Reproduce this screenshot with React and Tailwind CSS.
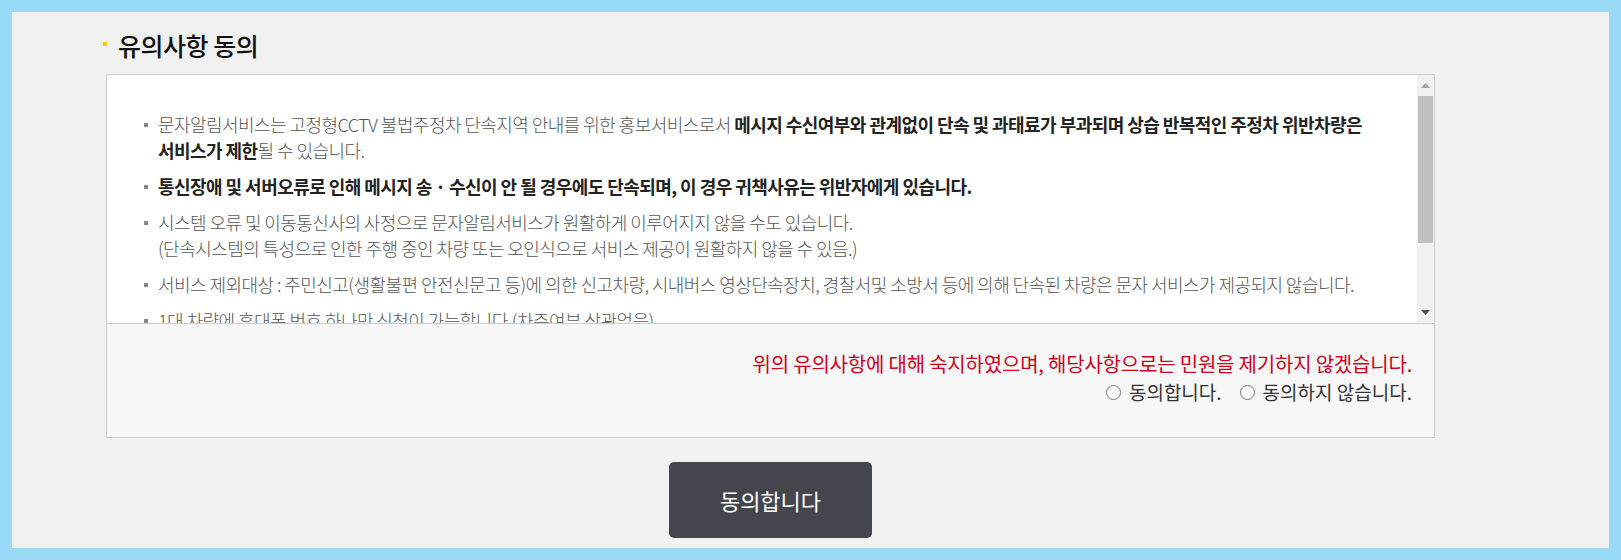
import React, { useState } from "react";

const notices = [
  {
    id: 1,
    content: (
      <>
        문자알림서비스는 고정형CCTV 불법주정차 단속지역 안내를 위한 홍보서비스로서{" "}
        <b className="font-bold text-[#222]">
          메시지 수신여부와 관계없이 단속 및 과태료가 부과되며 상습 반복적인 주정차 위반차량은 서비스가 제한
        </b>
        될 수 있습니다.
      </>
    ),
  },
  {
    id: 2,
    content: (
      <b className="font-bold text-[#222]">
        통신장애 및 서버오류로 인해 메시지 송 · 수신이 안 될 경우에도 단속되며, 이 경우 귀책사유는 위반자에게 있습니다.
      </b>
    ),
  },
  {
    id: 3,
    content: (
      <>
        시스템 오류 및 이동통신사의 사정으로 문자알림서비스가 원활하게 이루어지지 않을 수도 있습니다.
        <br />
        (단속시스템의 특성으로 인한 주행 중인 차량 또는 오인식으로 서비스 제공이 원활하지 않을 수 있음.)
      </>
    ),
  },
  {
    id: 4,
    content:
      "서비스 제외대상 : 주민신고(생활불편 안전신문고 등)에 의한 신고차량, 시내버스 영상단속장치, 경찰서및 소방서 등에 의해 단속된 차량은 문자 서비스가 제공되지 않습니다.",
  },
  {
    id: 5,
    content: "1대 차량에 휴대폰 번호 하나만 신청이 가능합니다.(차주여부 상관없음)",
  },
];

function Radio({ checked, label, onClick }) {
  return (
    <label className="flex items-center cursor-pointer" onClick={onClick}>
      <span className="w-[15px] h-[15px] rounded-full border border-[#777] bg-white mr-[8px] flex items-center justify-center">
        {checked && <span className="w-[7px] h-[7px] rounded-full bg-[#333]" />}
      </span>
      {label}
    </label>
  );
}

export default function App() {
  const [agree, setAgree] = useState(null);

  return (
    <div
      className="h-[560px] bg-[#98d9f5] p-3"
      style={{ fontFamily: '"Noto Sans CJK KR", "Noto Sans", sans-serif' }}
    >
      <div className="h-full bg-[#f1f1f1] pt-[17px]">
        <div className="ml-[94px] w-[1329px]">
          <h2 className="-ml-[3px] flex items-center text-[25px] leading-[32px] font-medium tracking-[-0.5px] text-[#111]">
            <span className="w-[4px] h-[4px] bg-[#ffcc00] mr-[11px] -mt-[2px]" />
            유의사항 동의
          </h2>

          <div className="mt-[13px] border border-[#cccccc] bg-white">
            <div className="flex h-[249px] border-b border-[#cccccc]">
              <ul className="flex-1 overflow-hidden pt-[36px] pl-[37px] pr-[20px] text-[18px] leading-[26px] font-light tracking-[-0.55px] text-[#555] break-keep">
                {notices.map((n) => (
                  <li key={n.id} className="flex mb-[10px]">
                    <span className="w-[4px] h-[4px] bg-[#888] mt-[12px] mr-[10px] shrink-0" />
                    <p>{n.content}</p>
                  </li>
                ))}
              </ul>

              <div className="w-[17px] flex flex-col bg-[#f1f1f1]">
                <div className="h-[21px] flex items-center justify-center">
                  <svg width="9" height="5" viewBox="0 0 9 5">
                    <path d="M0 5 L4.5 0 L9 5 Z" fill="#a3a3a3" />
                  </svg>
                </div>
                <div className="mx-[1px] h-[147px] bg-[#c1c1c1]" />
                <div className="flex-1" />
                <div className="h-[21px] flex items-center justify-center">
                  <svg width="9" height="5" viewBox="0 0 9 5">
                    <path d="M0 0 L9 0 L4.5 5 Z" fill="#505050" />
                  </svg>
                </div>
              </div>
            </div>

            <div className="h-[113px] bg-[#f7f7f7] pr-[22px] pt-[26px] text-right">
              <p className="text-[20px] leading-[28px] tracking-[-0.2px] text-[#d0021b]">
                위의 유의사항에 대해 숙지하였으며, 해당사항으로는 민원을 제기하지 않겠습니다.
              </p>
              <div className="flex justify-end gap-[18px] text-[19px] leading-[28px] text-[#333]">
                <Radio checked={agree === true} label="동의합니다." onClick={() => setAgree(true)} />
                <Radio checked={agree === false} label="동의하지 않습니다." onClick={() => setAgree(false)} />
              </div>
            </div>
          </div>

          <div className="flex justify-center mt-[24px]">
            <button className="w-[203px] h-[76px] rounded-[5px] bg-[#45464d] text-white text-[22px]">
              동의합니다
            </button>
          </div>
        </div>
      </div>
    </div>
  );
}
